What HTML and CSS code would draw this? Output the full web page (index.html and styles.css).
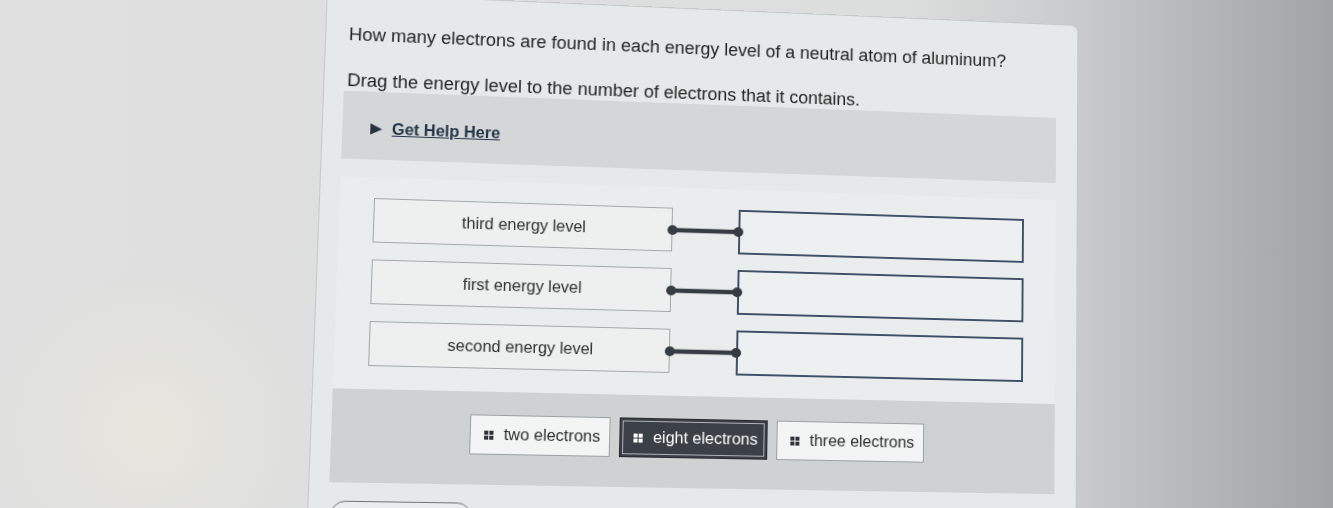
FILE: index.html
```html
<!DOCTYPE html>
<html lang="en">
<head>
    <meta charset="UTF-8">
    <meta name="viewport" content="width=device-width, initial-scale=1.0">
    <title>Electron Configuration Match</title>
    <link rel="stylesheet" href="styles.css">
</head>
<body>

    <!-- The screen is seen at a slight angle, so the whole sheet gets one projective transform -->
    <div class="screen">
        <div class="card">
            <div class="prompt">
                <p>How many electrons are found in each energy level of a neutral atom of aluminum?</p>
                <p>Drag the energy level to the number of electrons that it contains.</p>
            </div>

            <div class="help">
                <span class="arrow">&#9654;</span>
                <a href="#">Get Help Here</a>
            </div>

            <!-- Matching rows: term on the left, drop slot on the right -->
            <div class="match">
                <div class="row">
                    <div class="term">third energy level</div>
                    <svg class="link" viewBox="0 0 76 14"><line x1="5" y1="7" x2="71" y2="7"/><circle cx="5" cy="7" r="5"/><circle cx="71" cy="7" r="5"/></svg>
                    <div class="slot"></div>
                </div>
                <div class="row">
                    <div class="term">first energy level</div>
                    <svg class="link" viewBox="0 0 76 14"><line x1="5" y1="7" x2="71" y2="7"/><circle cx="5" cy="7" r="5"/><circle cx="71" cy="7" r="5"/></svg>
                    <div class="slot"></div>
                </div>
                <div class="row">
                    <div class="term">second energy level</div>
                    <svg class="link" viewBox="0 0 76 14"><line x1="5" y1="7" x2="71" y2="7"/><circle cx="5" cy="7" r="5"/><circle cx="71" cy="7" r="5"/></svg>
                    <div class="slot"></div>
                </div>
            </div>

            <!-- Answer bank -->
            <div class="bank">
                <div class="chip">
                    <svg class="grip" viewBox="0 0 9 9"><rect x="0" y="0" width="4" height="4"/><rect x="5" y="0" width="4" height="4"/><rect x="0" y="5" width="4" height="4"/><rect x="5" y="5" width="4" height="4"/></svg>
                    two electrons
                </div>
                <div class="chip selected">
                    <svg class="grip" viewBox="0 0 9 9"><rect x="0" y="0" width="4" height="4"/><rect x="5" y="0" width="4" height="4"/><rect x="0" y="5" width="4" height="4"/><rect x="5" y="5" width="4" height="4"/></svg>
                    eight electrons
                </div>
                <div class="chip">
                    <svg class="grip" viewBox="0 0 9 9"><rect x="0" y="0" width="4" height="4"/><rect x="5" y="0" width="4" height="4"/><rect x="0" y="5" width="4" height="4"/><rect x="5" y="5" width="4" height="4"/></svg>
                    three electrons
                </div>
            </div>

            <div class="actions">
                <button class="check"></button>
            </div>
        </div>
    </div>

</body>
</html>
```

FILE: styles.css
```css
html, body {
    margin: 0;
    height: 100%;
    overflow: hidden;
}

body {
    font-family: "Liberation Sans", Arial, sans-serif;
    background:
        radial-gradient(circle at 150px 430px, rgba(236, 232, 220, 0.6), rgba(236, 232, 220, 0) 160px),
        linear-gradient(90deg, #dfe0df 0, #dcdedd 900px, #c8cacc 1080px, #b4b6b9 1200px, #a1a3a7 100%);
}

.screen {
    display: flow-root;
    width: 1333px;
    transform-origin: 0 0;
    transform: matrix3d(1.068839, 0.045299, 0, 0.000057902,
                        -0.052001, 0.990278, 0, -0.0000448714,
                        0, 0, 1, 0,
                        -10.6385, -12.4543, 0, 1);
}

.card {
    width: 761px;
    height: 590px;
    margin: -10px 0 0 321px;
    box-sizing: border-box;
    padding: 30px 22px 0 19px;
    background: #e6e9e9;
    border: 1px solid #c6c9ca;
    border-radius: 8px;
}

.prompt p {
    margin: 0;
    padding-left: 3px;
    font-size: 18px;
    line-height: 22px;
    color: #1f2020;
}

.prompt p + p {
    margin-top: 25px;
}

.help {
    height: 69px;
    box-sizing: border-box;
    padding: 27px 0 0 27px;
    background: #d3d7d8;
    display: flex;
    align-items: flex-start;
    gap: 9px;
    line-height: 20px;
}

.help .arrow {
    font-size: 15px;
    color: #26313f;
}

.help a {
    margin-top: 1px;
    font-size: 16px;
    font-weight: bold;
    color: #263447;
    text-decoration: underline;
}

.match {
    margin-top: 18px;
    padding: 21px 35px 23px 33px;
    background: #eaeded;
    display: flex;
    flex-direction: column;
    gap: 17px;
}

.row {
    display: flex;
    align-items: center;
    height: 45px;
}

.term {
    width: 294px;
    height: 45px;
    flex: none;
    box-sizing: border-box;
    border: 1px solid #a4a8ab;
    background: #edf0ef;
    display: flex;
    align-items: center;
    justify-content: center;
    font-size: 16px;
    color: #2e2f30;
}

.link {
    width: 76px;
    height: 14px;
    flex: none;
    margin: 0 -5px;
    position: relative;
    z-index: 1;
}

.link line {
    stroke: #353c42;
    stroke-width: 4.5;
}

.link circle {
    fill: #353c42;
}

.slot {
    width: 292px;
    height: 46px;
    flex: none;
    box-sizing: border-box;
    border: 2px solid #415069;
    background: #edf0f0;
}

.bank {
    height: 93px;
    box-sizing: border-box;
    padding: 23px 1px 0 0;
    background: #ced2d2;
    display: flex;
    justify-content: center;
    align-items: flex-start;
    gap: 9px;
}

.chip {
    height: 40px;
    box-sizing: border-box;
    padding: 0 9px 0 13px;
    display: flex;
    align-items: center;
    gap: 10px;
    border: 1px solid #9ca1a4;
    background: #f3f4f4;
    font-size: 16px;
    color: #2b2c2d;
}

.grip {
    width: 9px;
    height: 9px;
    fill: #2f3337;
}

.chip.selected {
    background: #3b4046;
    color: #ffffff;
    border-color: #262a2f;
    box-shadow: inset 0 0 0 2px #3b4046, inset 0 0 0 3px #aeb3b8;
}

.chip.selected .grip {
    fill: #ffffff;
}

.actions {
    margin-top: 18px;
    padding-left: 2px;
}

.check {
    width: 135px;
    height: 36px;
    border: 1px solid #6f7477;
    border-radius: 14px;
    background: #eaeded;
}
```
